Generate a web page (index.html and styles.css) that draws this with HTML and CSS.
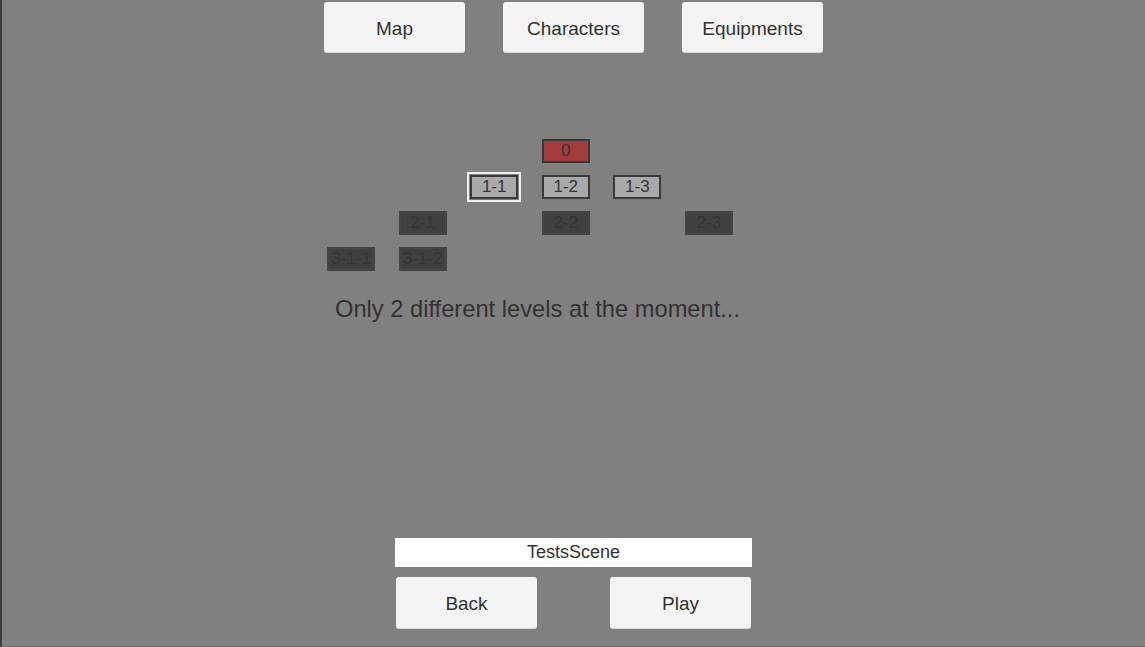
FILE: index.html
```html
<!DOCTYPE html>
<html lang="en">
<head>
	<meta charset="UTF-8">
	<meta name="viewport" content="width=device-width, initial-scale=1.0">
	<title>Level Select</title>
	<link rel="stylesheet" href="styles.css">
</head>
<body>
	<div class="screen">
		<div class="tabs">
			<button class="btn">Map</button>
			<button class="btn">Characters</button>
			<button class="btn">Equipments</button>
		</div>

		<div class="middle">
			<div class="tree">
				<div class="node current" style="grid-column: 4; grid-row: 1;">0</div>
				<div class="node open selected" style="grid-column: 3; grid-row: 2;">1-1</div>
				<div class="node open" style="grid-column: 4; grid-row: 2;">1-2</div>
				<div class="node open" style="grid-column: 5; grid-row: 2;">1-3</div>
				<div class="node locked" style="grid-column: 2; grid-row: 3;">2-1</div>
				<div class="node locked" style="grid-column: 4; grid-row: 3;">2-2</div>
				<div class="node locked" style="grid-column: 6; grid-row: 3;">2-3</div>
				<div class="node locked" style="grid-column: 1; grid-row: 4;">3-1-1</div>
				<div class="node locked" style="grid-column: 2; grid-row: 4;">3-1-2</div>
			</div>
			<p class="note">Only 2 different levels at the moment...</p>
		</div>

		<div class="bottom">
			<div class="scene">TestsScene</div>
			<div class="actions">
				<button class="btn">Back</button>
				<button class="btn">Play</button>
			</div>
		</div>
	</div>
</body>
</html>
```

FILE: styles.css
```css
html, body{
	margin: 0;
	padding: 0;
	background-color: #808080;
}
.screen{
	width: 1145px;
	height: 647px;
	box-sizing: border-box;
	border-left: 2px solid #3c3c3c;
	border-bottom: 1px solid #6c6c6c;
	display: flex;
	flex-direction: column;
	font-family: "Liberation Sans", Arial, sans-serif;
	color: #323232;
}
.btn{
	background-color: #f4f4f4;
	border: none;
	border-bottom: 1px solid #dadada;
	border-radius: 3px;
	font-family: "Liberation Sans", Arial, sans-serif;
	font-size: 19px;
	color: #323232;
	padding: 3px 0 0;
}
.tabs{
	display: flex;
	justify-content: center;
	gap: 38px;
	padding-top: 2px;
}
.tabs .btn{
	width: 141px;
	height: 51px;
}
.middle{
	width: 421px;
	margin-left: 325px;
	margin-top: 86px;
}
.tree{
	display: grid;
	grid-template-columns: repeat(6, 48px);
	grid-template-rows: repeat(4, 24px);
	column-gap: 23.6px;
	row-gap: 12px;
}
.node{
	box-sizing: border-box;
	width: 48px;
	height: 24px;
	border: 2px solid #3a3a3a;
	font-size: 17px;
	line-height: 20px;
	text-align: center;
	color: #353535;
}
.current{
	background-color: #a33d3d;
}
.open{
	background-color: #a9a9a9;
}
.selected{
	outline: 2px solid #f0f0f0;
	outline-offset: 1px;
}
.locked{
	background-color: #404040;
	border-color: #454545;
	color: #333333;
}
.note{
	margin: 25px 0 0;
	text-align: center;
	font-size: 23.7px;
}
.bottom{
	margin-top: auto;
	margin-bottom: 17px;
	align-self: center;
	width: 357px;
	display: flex;
	flex-direction: column;
	gap: 10px;
}
.scene{
	background-color: #ffffff;
	height: 29px;
	line-height: 29px;
	text-align: center;
	font-size: 18px;
}
.actions{
	display: flex;
	justify-content: space-between;
	padding: 0 1px;
}
.actions .btn{
	width: 141px;
	height: 52px;
}
```
